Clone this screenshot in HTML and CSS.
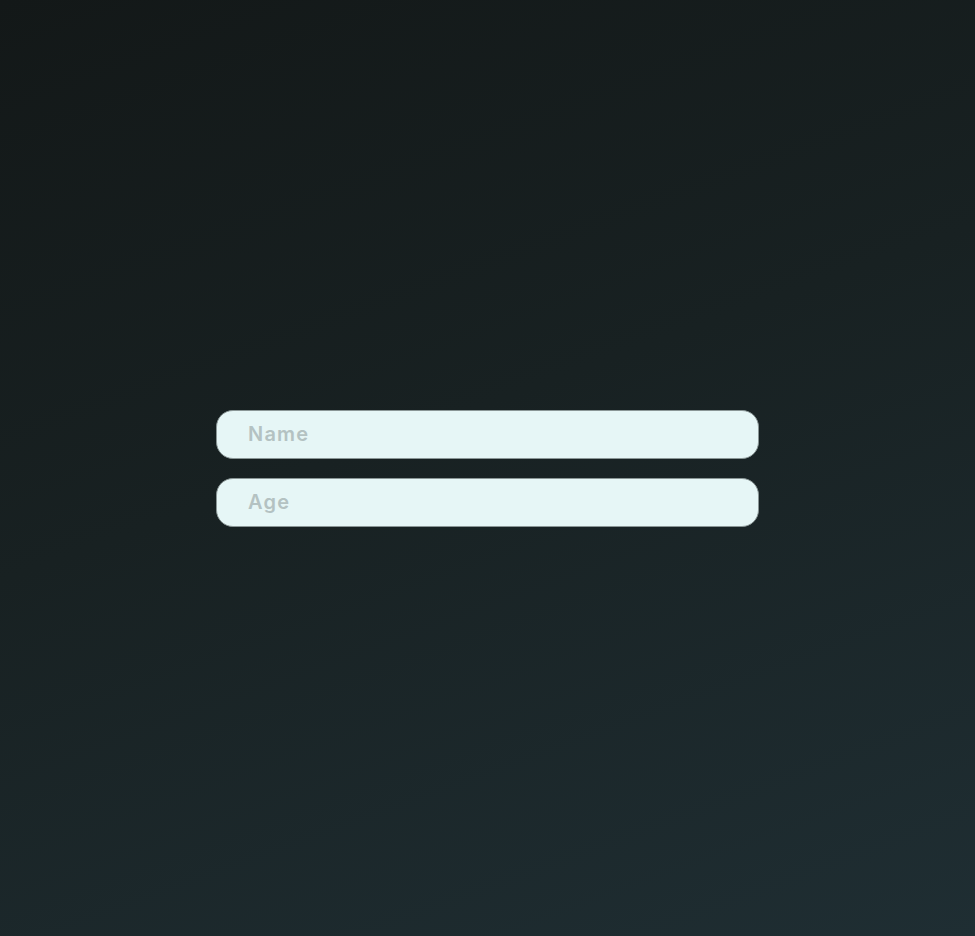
FILE: index.html
```html
<!DOCTYPE html>
<html lang="en">
<head>
<meta charset="utf-8">
<title>Form</title>
<link rel="stylesheet" href="styles.css">
</head>
<body>
<main class="page">
  <form class="form">
    <input class="field" type="text" placeholder="Name">
    <input class="field" type="text" placeholder="Age">
  </form>
</main>
</body>
</html>
```
FILE: styles.css
```css
html, body {
  margin: 0;
  padding: 0;
  height: 100%;
}
body {
  background: linear-gradient(160deg, #131818 0%, #182122 45%, #1f2e33 100%);
  font-family: "Inter", "Noto Sans", sans-serif;
}
.page {
  height: 100%;
  display: flex;
  align-items: center;
  justify-content: center;
}
.form {
  display: flex;
  flex-direction: column;
  gap: 19px;
  width: 543px;
}
.field {
  box-sizing: border-box;
  height: 49px;
  width: 100%;
  border: 1px solid #8a9696;
  border-radius: 17px;
  background: #e6f6f6;
  padding: 0 31px;
  font-family: inherit;
  font-size: 20px;
  font-weight: 600;
  letter-spacing: 1.2px;
  color: #1b2323;
  outline: none;
}
.field::placeholder {
  color: #b4c2c2;
}
```
